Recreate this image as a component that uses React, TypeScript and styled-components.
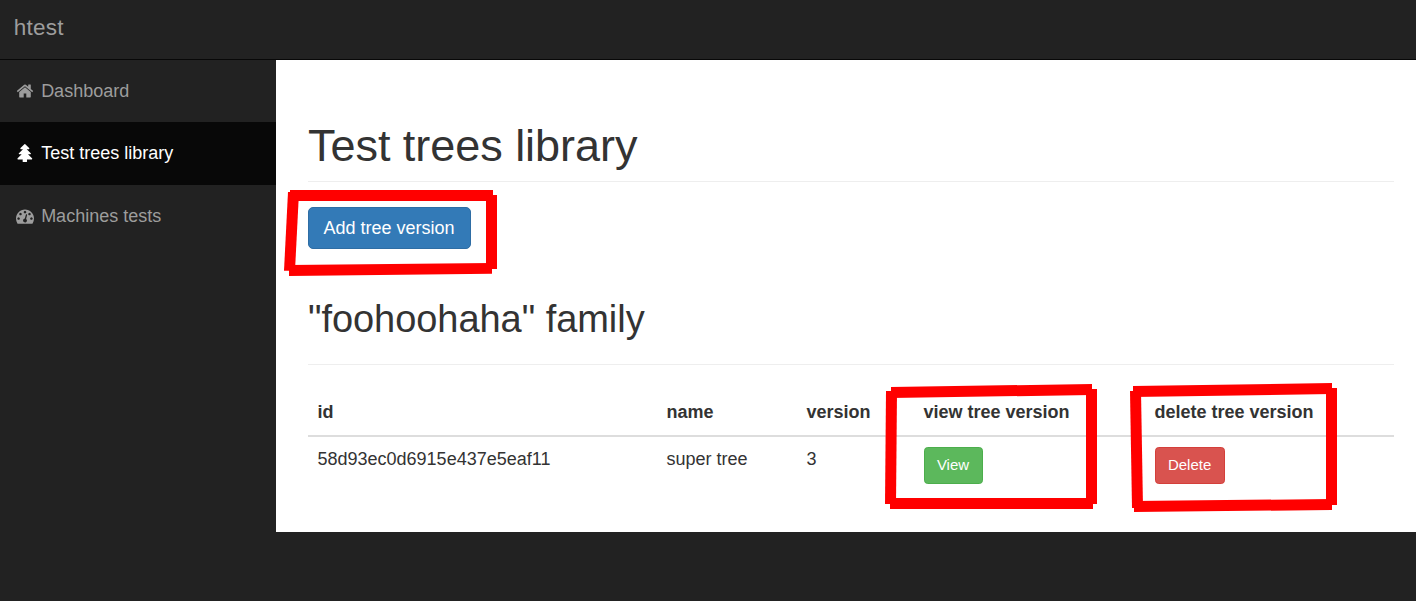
import React from "react";
import styled, { createGlobalStyle } from "styled-components";

const GlobalStyle = createGlobalStyle`
  * { box-sizing: border-box; }
  body {
    margin: 0;
    background: #222;
    color: #333;
    font-family: "Liberation Sans", Arial, sans-serif;
    font-size: 18px;
    line-height: 25px;
    overflow: hidden;
  }
`;

const Page = styled.div`
  position: relative;
  min-height: 601px;
`;

const Navbar = styled.header`
  height: 60px;
  border-bottom: 1px solid #080808;
  padding: 15px 0 0 13.75px;
`;

const Brand = styled.span`
  display: block;
  font-size: 22.5px;
  letter-spacing: 0.25px;
  color: #9d9d9d;
`;

const Body = styled.div`
  display: flex;
  align-items: flex-start;
`;

const Sidebar = styled.nav`
  flex: 0 0 276px;
`;

const NavItem = styled.a<{ $active?: boolean }>`
  display: flex;
  align-items: flex-start;
  height: ${(p) => (p.$active ? 63 : 62)}px;
  padding: 19px 0 0 13.75px;
  color: ${(p) => (p.$active ? "#fff" : "#9d9d9d")};
  background: ${(p) => (p.$active ? "#080808" : "transparent")};
`;

const IconSlot = styled.svg`
  width: 18px;
  height: 18px;
  margin: 2.6px 7.2px 0 2.2px;
  fill: currentColor;
`;

const Main = styled.main`
  flex: 1;
  height: 472px;
  padding: 61px 22px 0 32px;
  background: #fff;
`;

const PageTitle = styled.h1`
  height: 61px;
  margin: 0 0 25px;
  border-bottom: 1px solid #eee;
  font-size: 45px;
  letter-spacing: -0.04px;
  font-weight: normal;
  line-height: 49.5px;
`;

const FamilyTitle = styled.h2`
  height: 66px;
  margin: 50px 0 24px;
  border-bottom: 1px solid #eee;
  font-size: 38px;
  letter-spacing: -0.05px;
  font-weight: normal;
  line-height: 41px;
`;

const Button = styled.button<{ $bg: string; $border: string; $small?: boolean }>`
  display: block;
  height: ${(p) => (p.$small ? 37 : 42)}px;
  padding: ${(p) => (p.$small ? "0 12.4px 3px" : "0 15.6px 0 14.5px")};
  border: 1px solid ${(p) => p.$border};
  border-radius: ${(p) => (p.$small ? 3.75 : 5)}px;
  background: ${(p) => p.$bg};
  color: #fff;
  font-family: inherit;
  font-size: ${(p) => (p.$small ? 15 : 18)}px;
  line-height: 25px;
`;

const Table = styled.table`
  width: 100%;
  table-layout: fixed;
  border-collapse: collapse;
`;

const HeadCell = styled.th<{ $width?: number }>`
  width: ${(p) => (p.$width ? `${p.$width}px` : "auto")};
  height: 47px;
  padding: 0 0 0 9.5px;
  border-bottom: 2px solid #ddd;
  text-align: left;
  font-weight: bold;
`;

const Cell = styled.td`
  padding: 10px 0 0 9.5px;
  vertical-align: top;
`;

const Markup = styled.svg`
  position: absolute;
  inset: 0;
  pointer-events: none;
  fill: #f00;
`;

const icons = {
  home: "M1472 992v480q0 26-19 45t-45 19h-384v-384h-256v384h-384q-26 0-45-19t-19-45v-480q0-1 .5-3t.5-3l575-474 575 474q1 2 1 6zm223-69l-62 74q-8 9-21 11h-3q-13 0-21-7l-692-577-692 577q-12 8-24 7-13-2-21-11l-62-74q-8-10-7-23.5t11-21.5l719-599q32-26 76-26t76 26l244 204v-195q0-14 9-23t23-9h192q14 0 23 9t9 23v408l219 182q10 8 11 21.5t-7 23.5z",
  tree: "M1616 1472q0 26-19 45t-45 19h-462q1 17 6 87.5t5 108.5q0 25-18 42.5t-43 17.5h-320q-25 0-43-17.5t-18-42.5q0-38 5-108.5t6-87.5h-462q-26 0-45-19t-19-45 19-45l402-403h-229q-26 0-45-19t-19-45 19-45l402-403h-197q-26 0-45-19t-19-45 19-45l384-384q19-19 45-19t45 19l384 384q19 19 19 45t-19 45-45 19h-197l402 403q19 19 19 45t-19 45-45 19h-229l402 403q19 19 19 45z",
  gauge: "M384 1152q0-53-37.5-90.5t-90.5-37.5-90.5 37.5-37.5 90.5 37.5 90.5 90.5 37.5 90.5-37.5 37.5-90.5zm192-448q0-53-37.5-90.5t-90.5-37.5-90.5 37.5-37.5 90.5 37.5 90.5 90.5 37.5 90.5-37.5 37.5-90.5zm428 481l101-382q6-26-7.5-48.5t-38.5-29.5-48 6.5-30 39.5l-101 382q-60 5-107 43.5t-63 98.5q-20 77 20 146t117 89 146-20 89-117q16-60-6-117t-72-91zm660-33q0-53-37.5-90.5t-90.5-37.5-90.5 37.5-37.5 90.5 37.5 90.5 90.5 37.5 90.5-37.5 37.5-90.5zm-640-640q0-53-37.5-90.5t-90.5-37.5-90.5 37.5-37.5 90.5 37.5 90.5 90.5 37.5 90.5-37.5 37.5-90.5zm448 192q0-53-37.5-90.5t-90.5-37.5-90.5 37.5-37.5 90.5 37.5 90.5 90.5 37.5 90.5-37.5 37.5-90.5zm320 448q0 261-141 483-19 29-54 29h-1402q-35 0-54-29-141-221-141-483 0-182 71-348t191-286 286-191 348-71 348 71 286 191 191 286 71 348z",
};

const links: { label: string; icon: keyof typeof icons; active?: boolean }[] = [
  { label: "Dashboard", icon: "home" },
  { label: "Test trees library", icon: "tree", active: true },
  { label: "Machines tests", icon: "gauge" },
];

// Hand-drawn marker strokes around the three actions.
const strokes = [
  "290,190 493,190 493,201 290,201",
  "288,192 299,192 295,270.7 284,270.7",
  "289,265 492,263 492,273.7 289,276",
  "486,195 497,195 497,269 486,269",
  "891,387 1092,384 1092,395 891,398",
  "886,391 897,391 896,504 885,504",
  "890,498 1093,498 1093,509 890,509",
  "1086,389 1097,389 1097,504 1086,504",
  "1133,386 1332,383 1332,394 1133,397",
  "1130,391 1141,391 1143,508 1132,508",
  "1134,501 1332,499 1332,510 1134,512",
  "1326,388 1337,388 1337,505 1326,505",
];

export default function App() {
  return (
    <Page>
      <GlobalStyle />
      <Navbar>
        <Brand>htest</Brand>
      </Navbar>
      <Body>
        <Sidebar>
          {links.map((link) => (
            <NavItem key={link.label} $active={link.active}>
              <IconSlot viewBox="0 0 1792 1792">
                <path d={icons[link.icon]} />
              </IconSlot>
              {link.label}
            </NavItem>
          ))}
        </Sidebar>
        <Main>
          <PageTitle>Test trees library</PageTitle>
          <Button $bg="#337ab7" $border="#2e6da4">Add tree version</Button>
          <FamilyTitle>"foohoohaha" family</FamilyTitle>
          <Table>
            <thead>
              <tr>
                <HeadCell $width={349}>id</HeadCell>
                <HeadCell $width={140}>name</HeadCell>
                <HeadCell $width={117}>version</HeadCell>
                <HeadCell $width={231}>view tree version</HeadCell>
                <HeadCell>delete tree version</HeadCell>
              </tr>
            </thead>
            <tbody>
              <tr>
                <Cell>58d93ec0d6915e437e5eaf11</Cell>
                <Cell>super tree</Cell>
                <Cell>3</Cell>
                <Cell>
                  <Button $small $bg="#5cb85c" $border="#4cae4c">View</Button>
                </Cell>
                <Cell>
                  <Button $small $bg="#d9534f" $border="#d43f3a">Delete</Button>
                </Cell>
              </tr>
            </tbody>
          </Table>
        </Main>
      </Body>
      <Markup width="1416" height="601" viewBox="0 0 1416 601">
        {strokes.map((points) => (
          <polygon key={points} points={points} />
        ))}
      </Markup>
    </Page>
  );
}
